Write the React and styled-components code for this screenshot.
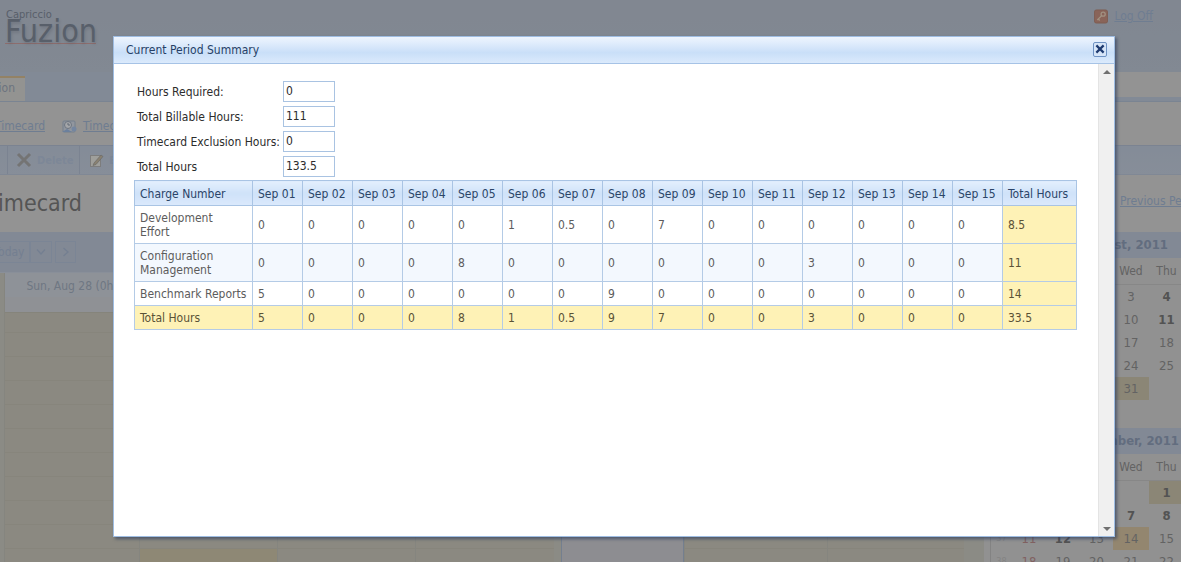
import React from "react";
import styled, { createGlobalStyle } from "styled-components";

const FONT = `"DejaVu Sans Condensed", "DejaVu Sans", "Noto Sans", sans-serif`;

const Global = createGlobalStyle`
  html, body { margin: 0; padding: 0; background: #cccccc; }
  body { font: 12px ${FONT}; font-stretch: condensed; }
  * { box-sizing: border-box; }
`;

const Page = styled.div`
  position: relative;
  width: 1181px;
  height: 562px;
  overflow: hidden;
  color: #505050;
`;

const Backdrop = styled.div`
  position: absolute;
  inset: 0;
  background: rgba(90, 90, 90, 0.5);
`;

/* ---------- page behind the dialog ---------- */
const Header = styled.header`
  height: 72px;
  display: flex;
  justify-content: space-between;
  padding: 8px 28px 0 5px;
  background: linear-gradient(#a8b4c8, #aab8cc);
`;
const Logo = styled.div`
  display: flex;
  flex-direction: column;
  color: #56647a;
`;
const LogoSmall = styled.span`
  font-size: 11px;
  line-height: 14px;
  padding-left: 1px;
`;
const LogoBig = styled.span`
  font-size: 32px;
  line-height: 24px;
  margin-top: -3px;
  width: 91px;
  border-bottom: 1px solid #c08080;
  text-shadow: 1px 2px 3px rgba(60, 70, 90, 0.3);
`;
const LogOff = styled.a`
  display: flex;
  align-items: center;
  gap: 6px;
  height: 16px;
  color: #84a0c8;
  text-decoration: underline;
`;
const TabBar = styled.nav`
  height: 30px;
  display: flex;
  align-items: flex-end;
  justify-content: space-between;
  background: #aabad2;
  border-bottom: 1px solid #9aaecb;
`;
const Tab = styled.div`
  width: 25px;
  height: 25px;
  background: #ccccc8;
  border-top: 2px solid #ccaa70;
  direction: rtl;
  overflow: hidden;
  line-height: 21px;
  padding-right: 10px;
  color: #7f8ea4;
  white-space: nowrap;
`;
const SearchStrip = styled.div`
  width: 200px;
  height: 25px;
  margin-bottom: 4px;
  background: #cccccc;
`;
const LinkBar = styled.div`
  height: 43px;
  display: flex;
  align-items: center;
  padding-top: 4px;
  background: #cccccc;
`;
const PageLink = styled.a`
  color: #84a0c8;
  text-decoration: underline;
  white-space: nowrap;
`;
const ClippedLink = styled(PageLink)`
  width: 45px;
  direction: rtl;
  overflow: hidden;
  flex: none;
  text-align: left;
`;
const LinkIcon = styled.svg`
  width: 17px;
  height: 16px;
  margin: 0 5px 0 16px;
  flex: none;
`;
const Toolbar = styled.div`
  height: 30px;
  display: flex;
  align-items: center;
  background: linear-gradient(#aebed6, #b4c2d8);
  border-top: 1px solid #9cacc8;
  border-bottom: 1px solid #a6b6d0;
`;
const ToolGroup = styled.div`
  display: flex;
  align-items: center;
  gap: 5px;
  height: 100%;
  padding-left: ${(p) => p.$pad}px;
  border-right: 1px solid #9cacc8;
  color: #a0b4d4;
  font-weight: 700;
  font-size: 11px;
  flex: none;
  overflow: hidden;
  width: ${(p) => p.$w}px;
  svg { flex: none; }
`;
const TitleRow = styled.div`
  height: 57px;
  display: flex;
  justify-content: space-between;
  background: #cccccc;
`;
const PageTitle = styled.h1`
  margin: 11px 0 0;
  width: 82px;
  font-size: 23px;
  line-height: 34px;
  font-weight: 400;
  color: #505050;
  direction: rtl;
  overflow: hidden;
  white-space: nowrap;
`;
const PrevLink = styled(PageLink)`
  width: 61px;
  margin-top: 19px;
  height: 18px;
  overflow: hidden;
`;
const Body = styled.div`
  display: flex;
`;
const Main = styled.main`
  width: 984px;
  flex: none;
`;
const NavBand = styled.div`
  height: 41px;
  display: flex;
  align-items: center;
  background: #aab8d0;
  border-bottom: 1px solid #b8c4d8;
`;
const NavButton = styled.button`
  all: unset;
  box-sizing: border-box;
  display: flex;
  align-items: center;
  justify-content: center;
  height: 22px;
  flex: none;
  width: ${(p) => p.$w}px;
  margin-left: ${(p) => p.$ml || 0}px;
  color: #8ea4c8;
  border: 1px solid #9cb0d0;
  font: 12px ${FONT};
  font-stretch: condensed;
`;
const Scheduler = styled.div`
  display: flex;
  padding-left: 4px;
  background: #bcbcb0;
`;
const DayColumn = styled.section`
  width: ${(p) => p.$w}px;
  flex: none;
  margin-right: ${(p) => p.$gap || 0}px;
  border-left: 1px solid ${(p) => (p.$today ? "#8ea4c4" : "#b0b0a4")};
  border-right: ${(p) => (p.$today ? "1px solid #8ea4c4" : "none")};
`;
const DayHead = styled.div`
  height: 24px;
  line-height: 26px;
  text-align: center;
  color: #8494ac;
  background: #c2cad6;
  white-space: nowrap;
  overflow: hidden;
`;
const DaySub = styled.div`
  height: 16px;
  background: #c4c8d0;
  border-bottom: 1px solid #b0ae9c;
`;
const Slot = styled.div`
  height: ${(p) => (p.$first ? 20 : 24)}px;
  background: ${(p) => (p.$today ? "#c0c0c8" : p.$busy ? "#c2b690" : "#bdb9a8")};
  border-bottom: 1px solid ${(p) => (p.$today ? "#c0c0c8" : "#b4b09e")};
`;
const Sidebar = styled.aside`
  flex: none;
  width: 197px;
  padding-left: 6px;
  background: #c8c8c8;
`;
const CalBox = styled.div`
  border-left: 1px solid #acacac;
  width: 300px;
  margin-bottom: 28px;
`;
const CalTitle = styled.div`
  height: 26px;
  line-height: 26px;
  width: 191px;
  padding-right: ${(p) => p.$pr}px;
  text-align: right;
  font-weight: 700;
  font-size: 13px;
  color: #6a80a4;
  background: #aab8d0;
  white-space: nowrap;
`;
const CalGrid = styled.div`
  display: grid;
  grid-template-columns: 21px 34px 34px 33px 36px 35px 35px 35px;
  grid-template-rows: 27px;
  grid-auto-rows: 23px;
`;
const Dow = styled.div`
  height: 27px;
  line-height: 26px;
  text-align: center;
  color: #6c6c6c;
  border-bottom: 1px solid #b4b4b4;
`;
const Day = styled.div`
  line-height: 23px;
  text-align: center;
  font-size: 13px;
  color: ${(p) => (p.$sun ? "#a86868" : p.$bold ? "#4c4c4c" : "#6c6c6c")};
  font-weight: ${(p) => (p.$bold ? 700 : 400)};
  background: ${(p) => (p.$now ? "#ccb284" : p.$mark ? "#bcb292" : "transparent")};
`;
const WeekNo = styled(Day)`
  font-size: 9px;
  color: #acacac;
`;

/* ---------- dialog ---------- */
const Dialog = styled.div`
  position: absolute;
  left: 113px;
  top: 36px;
  width: 1002px;
  height: 501px;
  display: flex;
  flex-direction: column;
  background: #fff;
  border: 1px solid #9fbde2;
  box-shadow: 2px 2px 3px rgba(45, 60, 90, 0.65);
`;
const TitleBar = styled.div`
  height: 27px;
  flex: none;
  display: flex;
  align-items: center;
  justify-content: space-between;
  padding: 0 7px 0 12px;
  color: #263f66;
  background: linear-gradient(#eef5fe 0%, #d9e8fb 35%, #c9dff8 60%, #dbeafc 100%);
  border-bottom: 1px solid #a6c3e6;
`;
const CloseButton = styled.button`
  all: unset;
  box-sizing: border-box;
  width: 14px;
  height: 15px;
  margin-bottom: 2px;
  display: flex;
  align-items: center;
  justify-content: center;
  background: #d6e5f8;
  border: 1px solid #6f93c4;
  border-radius: 2px;
`;
const DialogBody = styled.div`
  flex: 1;
  display: flex;
  min-height: 0;
`;
const Content = styled.div`
  flex: 1;
  padding: 15px 20px 0 20px;
`;
const Scrollbar = styled.div`
  width: 16px;
  flex: none;
  display: flex;
  flex-direction: column;
  justify-content: space-between;
  align-items: center;
  padding: 6px 0 5px;
  background: #f0f0f0;
  border-left: 1px solid #e4e4e4;
`;
const Arrow = styled.span`
  width: 0;
  height: 0;
  border-left: 4px solid transparent;
  border-right: 4px solid transparent;
  ${(p) => (p.$down ? "border-top: 4px solid #707070;" : "border-bottom: 4px solid #707070;")}
`;
const SummaryForm = styled.div`
  display: grid;
  grid-template-columns: 149px 52px;
  grid-auto-rows: 25px;
  align-items: center;
  margin-bottom: 1px;
`;
const FieldLabel = styled.label`
  padding-left: 3px;
  color: #2c2c2c;
  white-space: nowrap;
`;
const FieldInput = styled.div`
  height: 21px;
  width: 52px;
  line-height: 19px;
  padding-left: 2px;
  color: #2c2c2c;
  border: 1px solid #a9c3e2;
`;
const Table = styled.table`
  border-collapse: collapse;
  table-layout: fixed;
  width: 942px;
`;
const Th = styled.th`
  height: 25px;
  padding: 1px 0 0 5px;
  font-weight: 400;
  text-align: left;
  color: #2b4468;
  white-space: nowrap;
  border: 1px solid #a9c4e4;
  background: linear-gradient(#e3effd 0%, #cfe2f9 50%, #dbe9fc 100%);
`;
const Td = styled.td`
  padding: 0 0 0 5px;
  height: ${(p) => p.$h}px;
  line-height: 14px;
  white-space: pre-line;
  color: ${(p) => (p.$gold ? "#5a5236" : "#5c5c5c")};
  border: 1px solid #b4cbe6;
  background: ${(p) => (p.$gold ? "#fef2b6" : p.$alt ? "#f3f8fe" : "#fff")};
`;

const days = ["01","02","03","04","05","06","07","08","09","10","11","12","13","14","15"];
const rows = [
  { name: "Development\nEffort", h: 38, v: [0,0,0,0,0,1,0.5,0,7,0,0,0,0,0,0], t: 8.5 },
  { name: "Configuration\nManagement", h: 38, alt: true, v: [0,0,0,0,8,0,0,0,0,0,0,3,0,0,0], t: 11 },
  { name: "Benchmark Reports", h: 24, v: [5,0,0,0,0,0,0,9,0,0,0,0,0,0,0], t: 14 },
];
const totals = [5,0,0,0,8,1,0.5,9,7,0,0,3,0,0,0];
const fields = [
  ["Hours Required:", "0"],
  ["Total Billable Hours:", "111"],
  ["Timecard Exclusion Hours:", "0"],
  ["Total Hours", "133.5"],
];
const columns = [
  { w: 135, head: "Sun, Aug 28 (0h)" },
  { w: 138, head: "Mon, Aug 29 (8h)", busy: true },
  { w: 138, head: "Tue, Aug 30 (8h)" },
  { w: 139, gap: 7, head: "Wed, Aug 31 (8h)" },
  { w: 123, head: "Thu, Sep 1 (8h)", today: true },
  { w: 143, head: "Fri, Sep 2 (8h)" },
  { w: 137, head: "Sat, Sep 3 (0h)" },
];
const dow = ["Sun","Mon","Tue","Wed","Thu","Fri","Sat"];
const august = [
  [31,[31,1,2,3,4,5,6]],[32,[7,8,9,10,11,12,13]],[33,[14,15,16,17,18,19,20]],
  [34,[21,22,23,24,25,26,27]],[35,[28,29,30,31,"","",""]],
];
const september = [
  [35,["","","","",1,2,3]],[36,[4,5,6,7,8,9,10]],[37,[11,12,13,14,15,16,17]],[38,[18,19,20,21,22,23,24]],
];

function Calendar({ title, pr, weeks, mark, now, bold }) {
  return (
    <CalBox>
      <CalTitle $pr={pr}>{title}</CalTitle>
      <CalGrid>
        <Dow />
        {dow.map((d) => <Dow key={d}>{d}</Dow>)}
        {weeks.flatMap(([w, ds], i) => [
          <WeekNo key={`w${i}`}>{w}</WeekNo>,
          ...ds.map((d, j) => (
            <Day
              key={`${i}-${j}`}
              $sun={j === 0}
              $mark={mark.includes(d) && !(d === 31 && i === 0)}
              $now={d === now}
              $bold={bold.includes(d)}
            >{d}</Day>
          )),
        ])}
      </CalGrid>
    </CalBox>
  );
}

const KeyIcon = () => (
  <svg width="14" height="15" viewBox="0 0 15 15">
    <rect x="0.5" y="0.5" width="14" height="14" rx="2" fill="#b86e58" stroke="#a06048" />
    <circle cx="9.8" cy="5" r="2.2" fill="none" stroke="#e8c8a8" strokeWidth="1.4" />
    <path d="M8.2 6.6 3.5 11.3M4.6 10.2l1.5 1.5" stroke="#e8c8a8" strokeWidth="1.4" fill="none" />
  </svg>
);

export default function App() {
  return (
    <Page>
      <Global />
      <Header>
        <Logo>
          <LogoSmall>Capriccio</LogoSmall>
          <LogoBig>Fuzion</LogoBig>
        </Logo>
        <LogOff><KeyIcon />Log Off</LogOff>
      </Header>
      <TabBar>
        <Tab>Navigation</Tab>
        <SearchStrip />
      </TabBar>
      <LinkBar>
        <ClippedLink>Timecard</ClippedLink>
        <LinkIcon viewBox="0 0 17 16">
          <rect x="2" y="3" width="12" height="11" rx="1" fill="#c9d3e2" stroke="#8ea4c0" />
          <circle cx="7" cy="7" r="3.5" fill="#eef2f8" stroke="#7f8fa8" />
          <path d="M7 5v2h2" stroke="#6a7a92" fill="none" />
          <path d="M1 14l5-3 5 3z" fill="#7da6e0" />
          <circle cx="13" cy="11" r="2.5" fill="#8fb2e6" />
        </LinkIcon>
        <PageLink>Timecard Reports</PageLink>
      </LinkBar>
      <Toolbar>
        <ToolGroup $w={8} $pad={0} />
        <ToolGroup $w={72} $pad={8}>
          <svg width="16" height="16" viewBox="0 0 16 16">
            <path d="M2 2l12 12M14 2 2 14" stroke="#8e8e8e" strokeWidth="3" />
          </svg>
          Delete
        </ToolGroup>
        <ToolGroup $w={60} $pad={9}>
          <svg width="15" height="15" viewBox="0 0 15 15">
            <rect x="1.5" y="2.5" width="10" height="11" fill="#e4e4dc" stroke="#a0a0a0" />
            <path d="M5 10l7-8 2 1.500-7 8-3 1z" fill="#b8a888" stroke="#707070" strokeWidth=".6" />
          </svg>
          Edit
        </ToolGroup>
      </Toolbar>
      <TitleRow>
        <PageTitle>Timecard</PageTitle>
        <PrevLink>Previous Period</PrevLink>
      </TitleRow>
      <Body>
        <Main>
          <NavBand>
            <NavButton $w={42} $ml={-12}>Today</NavButton>
            <NavButton $w={22}>
              <svg width="10" height="6" viewBox="0 0 10 6"><path d="M1 0.500 5 5l4-4.500" fill="none" stroke="#8ea4c8" strokeWidth="1.300" /></svg>
            </NavButton>
            <NavButton $w={21} $ml={3}>
              <svg width="6" height="10" viewBox="0 0 6 10"><path d="M.5 1 5 5 .5 9" fill="none" stroke="#8ea4c8" strokeWidth="1.300" /></svg>
            </NavButton>
          </NavBand>
          <Scheduler>
            {columns.map((c) => (
              <DayColumn key={c.head} $w={c.w} $gap={c.gap} $today={c.today}>
                <DayHead>{c.head}</DayHead>
                <DaySub />
                {Array.from({ length: 11 }, (_, i) => (
                  <Slot key={i} $first={i === 0} $today={c.today} $busy={c.busy && i >= 10} />
                ))}
              </DayColumn>
            ))}
          </Scheduler>
        </Main>
        <Sidebar>
          <Calendar title="August, 2011" pr={14} weeks={august} mark={[31]} now={null} bold={[4, 11]} />
          <Calendar title="September, 2011" pr={3} weeks={september} mark={[1]} now={14} bold={[1, 7, 8, 12]} />
        </Sidebar>
      </Body>
      <Backdrop />
      <Dialog>
        <TitleBar>
          Current Period Summary
          <CloseButton aria-label="Close">
            <svg width="10" height="10" viewBox="0 0 11 10">
              <path d="M1.500 1l8 8M9.500 1l-8 8" stroke="#1d3a70" strokeWidth="2.400" />
            </svg>
          </CloseButton>
        </TitleBar>
        <DialogBody>
          <Content>
            <SummaryForm>
              {fields.map(([label, value]) => (
                <React.Fragment key={label}>
                  <FieldLabel>{label}</FieldLabel>
                  <FieldInput>{value}</FieldInput>
                </React.Fragment>
              ))}
            </SummaryForm>
            <Table>
              <colgroup>
                <col width="118" />
                {days.map((d) => <col key={d} width="50" />)}
                <col width="74" />
              </colgroup>
              <thead>
                <tr>
                  <Th>Charge Number</Th>
                  {days.map((d) => <Th key={d}>Sep {d}</Th>)}
                  <Th>Total Hours</Th>
                </tr>
              </thead>
              <tbody>
                {rows.map((r) => (
                  <tr key={r.name}>
                    <Td $h={r.h} $alt={r.alt}>{r.name}</Td>
                    {r.v.map((v, i) => <Td key={i} $h={r.h} $alt={r.alt}>{v}</Td>)}
                    <Td $h={r.h} $gold>{r.t}</Td>
                  </tr>
                ))}
                <tr>
                  <Td $h={24} $gold>Total Hours</Td>
                  {totals.map((v, i) => <Td key={i} $h={24} $gold>{v}</Td>)}
                  <Td $h={24} $gold>33.5</Td>
                </tr>
              </tbody>
            </Table>
          </Content>
          <Scrollbar>
            <Arrow />
            <Arrow $down />
          </Scrollbar>
        </DialogBody>
      </Dialog>
    </Page>
  );
}
